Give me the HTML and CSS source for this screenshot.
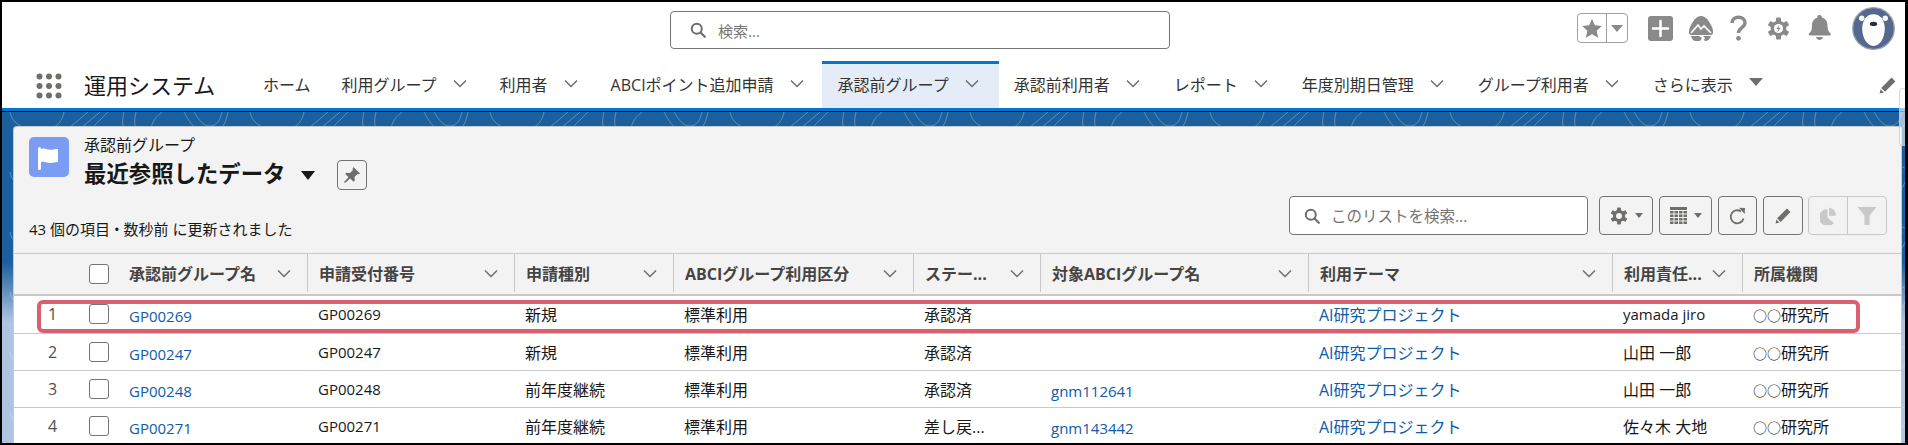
FILE: index.html
```html
<!DOCTYPE html>
<html lang="ja">
<head>
  <meta charset="UTF-8">
  <title>承認前グループ</title>
  <link rel="stylesheet" href="styles.css">
</head>
<body>
  <svg class="defs" width="0" height="0">
    <symbol id="chev" viewBox="0 0 14 9"><path d="M1 1.5l6 6 6-6" fill="none" stroke="#706e6b" stroke-width="1.5"/></symbol>
    <symbol id="glass" viewBox="0 0 16 16"><circle cx="6.8" cy="6.8" r="5" fill="none" stroke="#706e6b" stroke-width="2"/><path d="M10.5 10.5l4.3 4.3" stroke="#706e6b" stroke-width="2.2" stroke-linecap="round"/></symbol>
    <symbol id="pencil" viewBox="0 0 18 18"><path d="M12.6 1.6l3.8 3.8L6 15.8 2.2 12zM1.5 13.2l3.3 3.3L.6 17.4z" fill="currentColor"/></symbol>
    <symbol id="gear" viewBox="-12 -12 24 24"><g fill="currentColor"><circle r="8.2"/><rect x="-2.6" y="-11.4" width="5.2" height="22.8" rx="1"/><rect x="-2.6" y="-11.4" width="5.2" height="22.8" rx="1" transform="rotate(60)"/><rect x="-2.6" y="-11.4" width="5.2" height="22.8" rx="1" transform="rotate(120)"/></g><circle r="4" style="fill:var(--hole,#fff)"/></symbol>
  </svg>

  <div class="frame">
    <header class="top">
      <div class="global">
        <div class="search">
          <svg class="ico-16"><use href="#glass"/></svg>
          <span>検索...</span>
        </div>
        <div class="global-icons">
          <div class="fav">
            <span class="fav-star"><svg width="20" height="19" viewBox="0 0 20 19"><path d="M10 0l2.900 6.300 7 .8-5.200 4.700 1.400 6.900L10 15.300 3.900 18.700l1.400-6.900L.1 7.100l7-.8z" fill="#8a8a8a"/></svg></span>
            <span class="fav-more"><i class="caret-grey"></i></span>
          </div>
          <svg class="g-plus" width="25" height="25" viewBox="0 0 25 25"><rect width="25" height="25" rx="3" fill="#8a8a8a"/><path d="M12.500 5v15M5 12.500h15" stroke="#fff" stroke-width="2.600" stroke-linecap="round"/></svg>
          <svg class="g-trail" width="26" height="26" viewBox="0 0 26 26"><path d="M13 1c5 0 8 5 11 11 2 5 1 8-1 8H3c-2 0-3-3-1-8C5 6 8 1 13 1z" fill="#8a8a8a"/><path d="M3 18l7-8 3 4 3-3 7 7" fill="none" stroke="#fff" stroke-width="1.600"/><path d="M3 21h8l3 2-2 3H8c-3 0-4-2-5-5zM15 21h8c-1 3-3 5-6 5l-1-1 1-2z" fill="#8a8a8a"/></svg>
          <svg class="g-help" width="17" height="26" viewBox="0 0 17 26"><path d="M2 8c0-3.500 2.800-5.800 6.500-5.800S15 4.500 15 8c0 4.800-6.500 4.500-6.500 10" fill="none" stroke="#8a8a8a" stroke-width="3.400"/><circle cx="8.500" cy="23.300" r="2.400" fill="#8a8a8a"/></svg>
          <span class="g-gear"><svg width="23" height="23"><use href="#gear"/></svg><svg class="g-bolt" width="23" height="23" viewBox="-12 -12 24 24"><circle r="4.800" fill="#fff"/><path d="M1-4l-3.200 4.600H0L-1 4l3.200-4.800H0z" fill="#8a8a8a"/></svg></span>
          <svg class="g-bell" width="23" height="26" viewBox="0 0 23 26"><path d="M11.500 0c1.500 0 2.500 1 2.500 2.400 3.600 1 5.500 4 5.500 8 0 4.500 1 6 3 8 .6.600.4 2-.8 2H1.800c-1.200 0-1.400-1.400-.8-2 2-2 3-3.500 3-8 0-4 1.900-7 5.500-8C9 1 10 0 11.500 0z" fill="#8a8a8a"/><path d="M8 22h7c-.5 2-2 3-3.500 3S8.500 24 8 22z" fill="#8a8a8a"/></svg>
          <svg class="g-avatar" width="43" height="43" viewBox="0 0 42 42"><circle cx="21" cy="21" r="20.300" fill="#54698d" stroke="#9aa3b0" stroke-width="1.200"/><circle cx="9.500" cy="11" r="2.600" fill="#fff"/><circle cx="32.500" cy="11" r="2.600" fill="#fff"/><path d="M21 7c7 0 11 6 11 14 0 9-4.500 17-11 17S10 30 10 21C10 13 14 7 21 7z" fill="#fff"/><path d="M13.500 19c0-3 3-4.500 7.500-4.500s7.500 1.500 7.500 4.500c0 9-3 14-7.500 14s-7.500-5-7.500-14z" fill="#fff"/><path d="M14 16c-1 6 0 16 7 16.500C28 32 29 22 28 16c-1 3-3.500 3-7 3s-6 0-7-3z" fill="#fff"/><ellipse cx="21" cy="16.500" rx="3.600" ry="2.100" fill="#22304a"/></svg>
        </div>
      </div>
      <nav class="nav">
        <svg class="apps" width="26" height="26" viewBox="0 0 26 26" fill="#706e6b"><circle cx="3.500" cy="3.500" r="3"/><circle cx="13" cy="3.500" r="3"/><circle cx="22.500" cy="3.500" r="3"/><circle cx="3.500" cy="13" r="3"/><circle cx="13" cy="13" r="3"/><circle cx="22.500" cy="13" r="3"/><circle cx="3.500" cy="22.500" r="3"/><circle cx="13" cy="22.500" r="3"/><circle cx="22.500" cy="22.500" r="3"/></svg>
        <span class="app-name">運用システム</span>
        <ul class="tabs">
          <li class="tab tab-home"><span>ホーム</span></li>
          <li class="tab"><span>利用グループ</span><svg class="chev"><use href="#chev"/></svg></li>
          <li class="tab"><span>利用者</span><svg class="chev"><use href="#chev"/></svg></li>
          <li class="tab"><span>ABCIポイント追加申請</span><svg class="chev"><use href="#chev"/></svg></li>
          <li class="tab active"><span>承認前グループ</span><svg class="chev"><use href="#chev"/></svg></li>
          <li class="tab"><span>承認前利用者</span><svg class="chev"><use href="#chev"/></svg></li>
          <li class="tab"><span>レポート</span><svg class="chev"><use href="#chev"/></svg></li>
          <li class="tab"><span>年度別期日管理</span><svg class="chev"><use href="#chev"/></svg></li>
          <li class="tab"><span>グループ利用者</span><svg class="chev"><use href="#chev"/></svg></li>
          <li class="tab"><span>さらに表示</span><i class="caret-more"></i></li>
        </ul>
        <svg class="nav-edit" width="18" height="18"><use href="#pencil"/></svg>
      </nav>
    </header>
    <div class="accent"></div>

    <main class="content">
      <svg class="topo" width="1904" height="340">
        <defs>
          <pattern id="lines" width="240" height="60" patternUnits="userSpaceOnUse">
            <g fill="none" stroke="#fff" stroke-opacity=".28" stroke-width="1">
              <path d="M8 0c2 12 14 18 30 18s22-8 24-18"/>
              <path d="M60 22L86 0M72 22L98 0M84 22L106 0"/>
              <path d="M122 0c-2 8-2 16 2 24M134 0c-2 8-2 16 2 24M160 0c-8 6-12 14-12 24"/>
              <path d="M182 0c6 12 14 22 26 22s16-12 18-22M192 0c5 8 9 14 16 14s10-6 12-14"/>
              <path d="M20 30c30 10 20 30 60 30M140 34c30-6 60 10 90 26"/>
            </g>
          </pattern>
        </defs>
        <rect width="1904" height="340" fill="url(#lines)"/>
      </svg>

      <section class="card">
        <div class="list-head">
          <div class="list-title">
            <div class="title-row">
              <svg class="obj-icon" width="40" height="40" viewBox="0 0 40 40"><rect width="40" height="40" rx="5" fill="#7b9cf3"/><rect x="9" y="10" width="3" height="23" rx="1.500" fill="#fff"/><path d="M12 12c4-1.500 6 .8 9 .8s5-.8 8-.8v13c-3 0-5 1-8 1s-5-2-9-1z" fill="#fff"/></svg>
              <div class="title-text">
                <div class="obj-name">承認前グループ</div>
                <div class="view-row">
                  <h1>最近参照したデータ</h1>
                  <i class="caret-title"></i>
                  <button class="pin"><svg width="18" height="18" viewBox="0 0 18 18"><path d="M10.500 1l6.500 6.500-1.500 1-1-.5-3 3 .3 3.500-1.300 1.300-3.300-3.300L2 17l-1-1 4.500-4.700-3.300-3.300L3.500 6.700 7 7l3-3-.5-1z" fill="#706e6b"/></svg></button>
                </div>
              </div>
            </div>
            <div class="status">43 個の項目 • 数秒前 に更新されました</div>
          </div>

          <div class="toolbar">
            <div class="list-search">
              <svg class="ico-16"><use href="#glass"/></svg>
              <span>このリストを検索...</span>
            </div>
            <button class="tool w-gear"><svg width="18" height="18" class="tool-ico"><use href="#gear"/></svg><i class="caret-tool"></i></button>
            <button class="tool w-table"><svg width="17" height="17" viewBox="0 0 17 17" fill="#706e6b"><rect width="17" height="3"/><path d="M0 4h3.500v2.500H0zM4.500 4H8v2.500H4.500zM9 4h3.500v2.500H9zM13.500 4H17v2.500h-3.500zM0 7.500h3.500V10H0zM4.500 7.500H8V10H4.500zM9 7.500h3.500V10H9zM13.500 7.500H17V10h-3.500zM0 11h3.500v2.500H0zM4.500 11H8v2.500H4.500zM9 11h3.500v2.500H9zM13.500 11H17v2.500h-3.500zM0 14.500h3.500V17H0zM4.500 14.500H8V17H4.500zM9 14.500h3.500V17H9zM13.500 14.500H17V17h-3.500z"/></svg><i class="caret-tool"></i></button>
            <button class="tool w-refresh"><svg width="18" height="18" viewBox="0 0 18 18"><path d="M14.500 11.500A6.500 6.500 0 1 1 12 4.500" fill="none" stroke="#706e6b" stroke-width="1.800"/><path d="M10 .8l6 .2-.3 6z" fill="#706e6b"/></svg></button>
            <button class="tool w-edit"><svg class="tool-ico" width="17" height="17"><use href="#pencil"/></svg></button>
            <div class="tool-group">
              <span><svg width="17" height="18" viewBox="0 0 17 18" fill="#c9c9c9"><path d="M7.500 2v8.500l6.500 5.500A8.500 8.500 0 1 1 7.500 2z"/><path d="M9 .6a8 8 0 0 1 7 8.200H9z"/></svg></span>
              <span><svg width="20" height="18" viewBox="0 0 20 18"><path d="M.5 0h19l-7 8.500V18h-5V8.500z" fill="#c9c9c9"/></svg></span>
            </div>
          </div>
        </div>

        <table class="grid">
          <colgroup>
            <col class="c-num"><col class="c-check"><col class="c-name"><col class="c-no"><col class="c-type"><col class="c-use"><col class="c-status"><col class="c-group"><col class="c-theme"><col class="c-owner"><col>
          </colgroup>
          <thead>
            <tr>
              <th></th>
              <th class="check-cell"><span class="check"></span></th>
              <th class="first"><div class="th-in"><span>承認前グループ名</span><svg class="chev"><use href="#chev"/></svg></div></th>
              <th><div class="th-in"><span>申請受付番号</span><svg class="chev"><use href="#chev"/></svg></div></th>
              <th><div class="th-in"><span>申請種別</span><svg class="chev"><use href="#chev"/></svg></div></th>
              <th><div class="th-in"><span>ABCIグループ利用区分</span><svg class="chev"><use href="#chev"/></svg></div></th>
              <th><div class="th-in"><span>ステー...</span><svg class="chev"><use href="#chev"/></svg></div></th>
              <th><div class="th-in"><span>対象ABCIグループ名</span><svg class="chev"><use href="#chev"/></svg></div></th>
              <th><div class="th-in"><span>利用テーマ</span><svg class="chev"><use href="#chev"/></svg></div></th>
              <th><div class="th-in"><span>利用責任...</span><svg class="chev"><use href="#chev"/></svg></div></th>
              <th><div class="th-in"><span>所属機関</span></div></th>
            </tr>
          </thead>
          <tbody>
            <tr>
              <td class="num">1</td><td class="check-cell"><span class="check"></span></td>
              <td class="low"><a class="lt">GP00269</a></td><td><span class="lt">GP00269</span></td><td>新規</td><td>標準利用</td><td>承認済</td><td></td>
              <td><a>AI研究プロジェクト</a></td><td><span class="lt">yamada jiro</span></td><td><span class="maru">○○</span>研究所</td>
            </tr>
            <tr>
              <td class="num">2</td><td class="check-cell"><span class="check"></span></td>
              <td class="low"><a class="lt">GP00247</a></td><td><span class="lt">GP00247</span></td><td>新規</td><td>標準利用</td><td>承認済</td><td></td>
              <td><a>AI研究プロジェクト</a></td><td>山田 一郎</td><td><span class="maru">○○</span>研究所</td>
            </tr>
            <tr>
              <td class="num">3</td><td class="check-cell"><span class="check"></span></td>
              <td class="low"><a class="lt">GP00248</a></td><td><span class="lt">GP00248</span></td><td>前年度継続</td><td>標準利用</td><td>承認済</td><td class="low"><a class="lt">gnm112641</a></td>
              <td><a>AI研究プロジェクト</a></td><td>山田 一郎</td><td><span class="maru">○○</span>研究所</td>
            </tr>
            <tr>
              <td class="num">4</td><td class="check-cell"><span class="check"></span></td>
              <td class="low"><a class="lt">GP00271</a></td><td><span class="lt">GP00271</span></td><td>前年度継続</td><td>標準利用</td><td>差し戻...</td><td class="low"><a class="lt">gnm143442</a></td>
              <td><a>AI研究プロジェクト</a></td><td>佐々木 大地</td><td><span class="maru">○○</span>研究所</td>
            </tr>
          </tbody>
        </table>

        <div class="highlight"></div>
      </section>
    </main>

    <div class="scroll-thumb"></div>
  </div>
</body>
</html>
```

FILE: styles.css
```css
* {
  box-sizing: border-box;
}
html, body {
  margin: 0;
  height: 100%;
  overflow: hidden;
}
body {
  font-family: "Open Sans", "Noto Sans CJK JP", sans-serif;
  font-size: 16px;
  color: #181818;
  background: #000;
}
.defs {
  position: absolute;
}
.frame {
  position: relative;
  display: flex;
  flex-direction: column;
  height: 445px;
  width: 1908px;
  border-style: solid;
  border-color: #000;
  border-width: 2px 3px 2px 2px;
  overflow: hidden;
}
.lt {
  font-size: 15px;
}
.maru {
  font-size: 14px;
}
.ico-16 {
  width: 16px;
  height: 16px;
  flex: none;
}
.chev {
  width: 14px;
  height: 9px;
  flex: none;
}

/* global header */
.top {
  background: #fff;
  height: 106px;
  flex: none;
}
.global {
  display: flex;
  align-items: flex-start;
  height: 59px;
  padding-left: 668px;
}
.search {
  display: flex;
  align-items: center;
  gap: 12px;
  width: 500px;
  height: 38px;
  margin-top: 9px;
  padding-left: 19px;
  background: #fff;
  border: 1px solid #747474;
  border-radius: 4px;
  color: #747474;
  font-size: 15px;
}
.global-icons {
  display: flex;
  align-items: center;
  height: 44px;
  margin-top: 4px;
  margin-left: 407px;
}
.fav {
  display: flex;
  width: 51px;
  height: 30px;
  border: 1px solid #a0a0a0;
  border-radius: 4px;
}
.fav-star {
  display: flex;
  align-items: center;
  justify-content: center;
  width: 29px;
  border-right: 1px solid #a0a0a0;
}
.fav-more {
  display: flex;
  align-items: center;
  justify-content: center;
  flex: 1;
}
.caret-grey {
  border-style: solid;
  border-width: 7px 6px 0;
  border-color: #8a8a8a transparent transparent;
}
.g-plus {
  margin-left: 20px;
}
.g-trail {
  margin-left: 15px;
}
.g-help {
  margin-left: 16px;
}
.g-gear {
  position: relative;
  display: flex;
  margin-left: 20px;
  color: #8a8a8a;
}
.g-bolt {
  position: absolute;
  left: 0;
  top: 0;
}
.g-bell {
  margin-left: 18px;
}
.g-avatar {
  margin-left: 21px;
}

/* app nav */
.nav {
  display: flex;
  align-items: stretch;
  height: 47px;
  padding-left: 34px;
}
.apps {
  align-self: center;
  margin-top: 2px;
}
.app-name {
  align-self: center;
  margin-left: 22px;
  font-size: 22px;
  line-height: 32px;
  width: 164px;
}
.tabs {
  display: flex;
  margin: 0;
  padding: 0 0 2px;
  list-style: none;
}
.tab {
  display: flex;
  align-items: center;
  gap: 16px;
  padding: 0 18px 0 15px;
  white-space: nowrap;
  color: #333;
}
.tab-home {
  padding-right: 16px;
}
.tab.active {
  background: #e4edf7;
  border-top: 3px solid #0176d3;
  margin-bottom: -2px;
  padding: 0 20px 5px 16px;
}
.tab.active ~ .tab {
  padding-right: 19px;
}
.caret-more {
  border-style: solid;
  border-width: 8px 7px 0;
  border-color: #706e6b transparent transparent;
  margin-top: -3px;
}
.nav-edit {
  align-self: center;
  margin-left: auto;
  margin-right: 8px;
  color: #706e6b;
}
.accent {
  height: 4px;
  flex: none;
  background: #0176d3;
  border-bottom: 1px solid #000;
}

/* page body with the contour background */
.content {
  position: relative;
  flex: 1;
  min-height: 0;
  padding: 14px 0 0 11px;
  background: linear-gradient(#1b5f9e 0, #1b5f9e 150px, #aec4e0 210px);
}
.topo {
  position: absolute;
  left: 0;
  top: 0;
}
.card {
  position: relative;
  width: 1889px;
  height: 320px;
  background: #f3f3f3;
  border: 1px solid #c9c9c9;
  border-bottom: 0;
  border-radius: 4px 4px 0 0;
}
.list-head {
  display: flex;
  justify-content: space-between;
  height: 126px;
  padding: 10px 14px 14px 15px;
}
.list-title {
  display: flex;
  flex-direction: column;
  justify-content: space-between;
}
.title-row {
  display: flex;
  gap: 15px;
}
.obj-name {
  font-size: 16px;
  line-height: 18px;
  margin-top: -1px;
}
.view-row {
  display: flex;
  align-items: center;
  margin-top: 3px;
}
.view-row h1 {
  margin: 0;
  font-size: 22.4px;
  line-height: 30px;
  font-weight: 700;
}
.caret-title {
  margin-left: 15px;
  margin-top: 3px;
  border-style: solid;
  border-width: 9px 7px 0;
  border-color: #181818 transparent transparent;
}
.pin {
  display: flex;
  align-items: center;
  justify-content: center;
  width: 30px;
  height: 30px;
  margin-left: 22px;
  margin-top: 3px;
  padding: 0;
  background: transparent;
  border: 1px solid #747474;
  border-radius: 4px;
}
.status {
  font-size: 15px;
  line-height: 20px;
}
.toolbar {
  display: flex;
  align-self: flex-end;
  gap: 6px;
  height: 39px;
  margin-bottom: 4px;
  --hole: #f3f3f3;
}
.list-search {
  display: flex;
  align-items: center;
  gap: 11px;
  width: 299px;
  height: 39px;
  margin-right: 5px;
  padding-left: 14px;
  background: #fff;
  border: 1px solid #747474;
  border-radius: 4px;
  color: #747474;
  font-size: 15.5px;
}
.tool {
  display: flex;
  align-items: center;
  justify-content: center;
  gap: 7px;
  height: 39px;
  padding: 0;
  background: transparent;
  border: 1px solid #747474;
  border-radius: 4px;
}
.tool-ico {
  color: #706e6b;
}
.w-gear {
  width: 54px;
}
.w-table {
  width: 53px;
}
.w-refresh {
  width: 39px;
}
.w-edit {
  width: 40px;
  margin-right: -1px;
}
.caret-tool {
  border-style: solid;
  border-width: 5px 4px 0;
  border-color: #706e6b transparent transparent;
}
.tool-group {
  display: flex;
  width: 79px;
  height: 39px;
  border: 1px solid #c9c9c9;
  border-radius: 4px;
}
.tool-group span {
  display: flex;
  align-items: center;
  justify-content: center;
  flex: 1;
}
.tool-group span + span {
  border-left: 1px solid #c9c9c9;
}

/* data table */
.grid {
  width: 100%;
  table-layout: fixed;
  border-collapse: separate;
  border-spacing: 0;
}
.c-num { width: 61px; }
.c-check { width: 42px; }
.c-name { width: 190px; }
.c-no { width: 207px; }
.c-type { width: 159px; }
.c-use { width: 240px; }
.c-status { width: 127px; }
.c-group { width: 268px; }
.c-theme { width: 304px; }
.c-owner { width: 130px; }
.grid th {
  height: 43px;
  padding: 0;
  border-top: 1px solid #c9c9c9;
  border-bottom: 2px solid #c9c9c9;
  color: #444;
  font-weight: 700;
  text-align: left;
}
.th-in {
  display: flex;
  align-items: center;
  justify-content: space-between;
  height: 38px;
  margin-bottom: 2px;
  padding: 0 16px 0 11px;
  border-left: 1px solid #c9c9c9;
  white-space: nowrap;
}
.grid th.first .th-in {
  border-left: 0;
  padding-left: 12px;
}
.grid td {
  height: 37px;
  padding: 0 0 1px 11px;
  background: #fff;
  border-bottom: 1px solid #c9c9c9;
  white-space: nowrap;
}
.grid tbody tr:first-child td {
  height: 38px;
  padding-bottom: 2px;
}
.grid td.low {
  padding-top: 4px;
  padding-bottom: 0;
}
.grid td:nth-child(3) {
  padding-left: 12px;
}
.grid td.num {
  padding-left: 34px;
  color: #514f4d;
}
.grid td.check-cell, .grid th.check-cell {
  padding-left: 14px;
  padding-bottom: 0;
}
.grid a {
  color: #0b5cab;
}
.check {
  display: block;
  width: 20px;
  height: 20px;
  background: #fff;
  border: 1px solid #747474;
  border-radius: 3px;
}
.highlight {
  position: absolute;
  left: 23px;
  top: 173px;
  width: 1823px;
  height: 33px;
  border: 4px solid #d8606f;
  border-radius: 6px;
  pointer-events: none;
}
.scroll-thumb {
  position: absolute;
  right: 0;
  top: 86px;
  width: 6px;
  height: 58px;
  background: rgba(255, 255, 255, .6);
  border-radius: 4px 0 0 4px;
  border: 1px solid rgba(200, 200, 200, .7);
  border-right: 0;
}
```
